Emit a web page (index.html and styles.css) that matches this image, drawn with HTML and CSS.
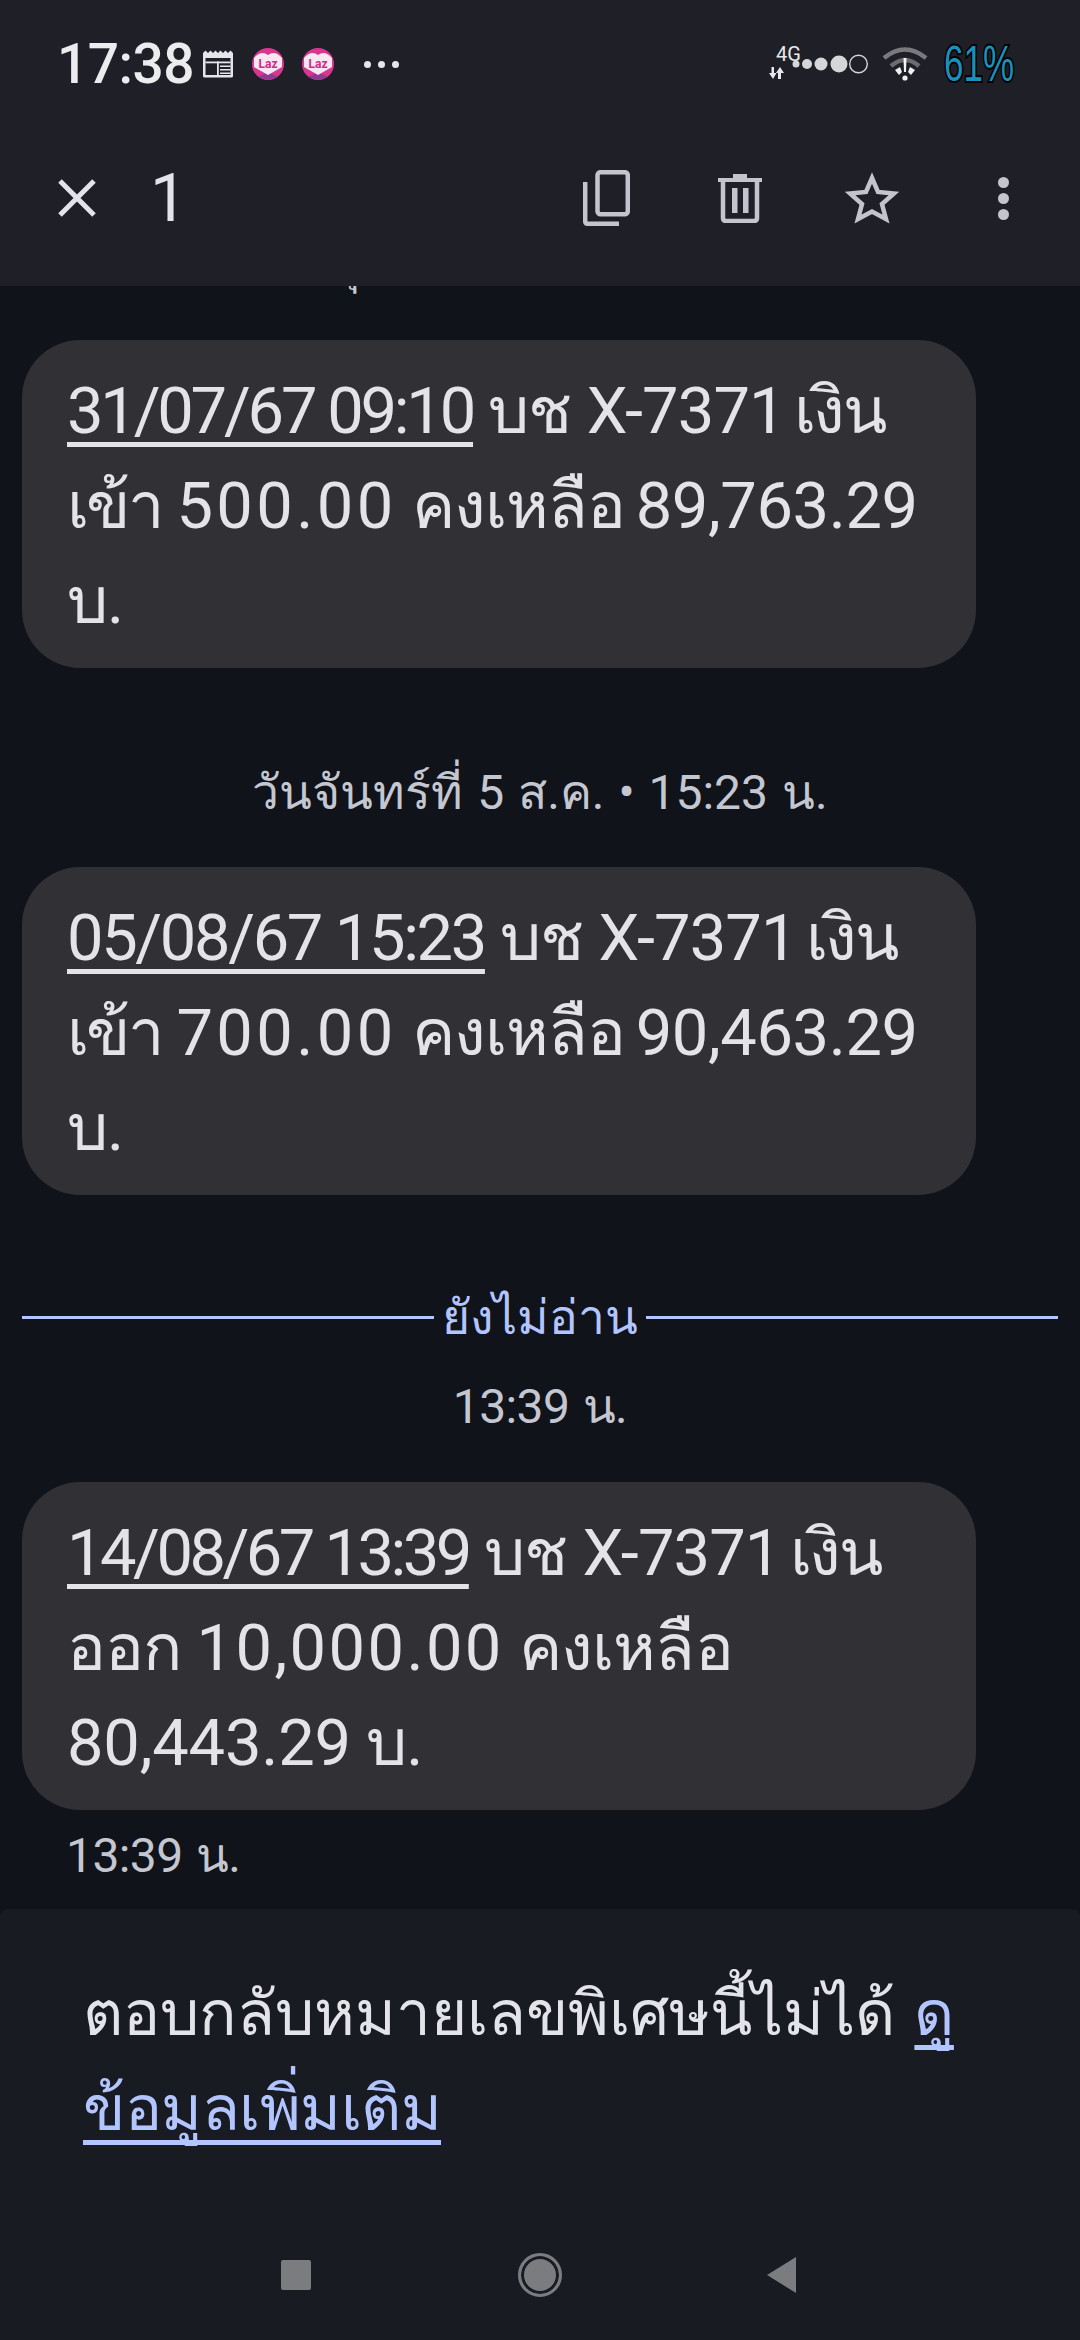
FILE: index.html
```html
<!DOCTYPE html>
<html lang="th">
<head>
  <meta charset="utf-8" />
  <title>ข้อความ</title>
  <link rel="stylesheet" href="styles.css">
</head>
<body>

<header class="appbar">
  <div class="status">
    <div class="status-left">
      <span class="clock">17:38</span>
      <svg class="ico-news" viewBox="0 0 30 28" width="30" height="28">
        <path d="M0 3 L2.5 0.5 L5 3 L7.5 0.5 L10 3 L12.5 0.5 L15 3 L17.5 0.5 L20 3 L22.5 0.5 L25 3 L27.5 0.5 L30 3 V26 Q30 27.5 28.5 27.5 H1.5 Q0 27.5 0 26 Z" fill="#e6e6ea"/>
        <rect x="2.5" y="8" width="25" height="17" fill="#1f2027"/>
        <rect x="2.5" y="11.5" width="25" height="1.8" fill="#e6e6ea"/>
        <rect x="14" y="11.5" width="1.8" height="14" fill="#e6e6ea"/>
        <rect x="17" y="15.5" width="10.5" height="1.5" fill="#e6e6ea"/>
        <rect x="17" y="19" width="10.5" height="1.5" fill="#e6e6ea"/>
        <rect x="17" y="22.5" width="10.5" height="1.5" fill="#e6e6ea"/>
      </svg>
      <svg class="ico-laz" viewBox="0 0 32 32" width="32" height="32">
        <circle cx="16" cy="16" r="16" fill="#d9368f"/>
        <path d="M6 29 L16 24 L26 29 L16 32 Z" fill="#8e3a94"/>
        <path d="M2 10 Q9 2 16 7 Q23 2 30 10 V19 L16 27 L2 19 Z" fill="#f8e6f0"/>
        <text x="16" y="20" class="laz-text">Laz</text>
      </svg>
      <svg class="ico-laz" viewBox="0 0 32 32" width="32" height="32">
        <circle cx="16" cy="16" r="16" fill="#d9368f"/>
        <path d="M6 29 L16 24 L26 29 L16 32 Z" fill="#8e3a94"/>
        <path d="M2 10 Q9 2 16 7 Q23 2 30 10 V19 L16 27 L2 19 Z" fill="#f8e6f0"/>
        <text x="16" y="20" class="laz-text">Laz</text>
      </svg>
      <span class="more-dots"><i></i><i></i><i></i></span>
    </div>
    <div class="status-right">
      <div class="net">
        <span class="net-label">4G</span>
        <svg class="net-arrows" viewBox="0 0 16 12" width="16" height="12">
          <path d="M5 0 V6 H7.5 L4 12 L0 6 H2.5 V0 Z M9 12 V6 H7 L11 0 L15 6 H12 V12 Z" fill="#e8e8ec"/>
        </svg>
      </div>
      <svg class="signal" viewBox="0 0 76 22" width="76" height="22">
        <circle cx="4" cy="11" r="3.5" fill="#d6d6d9"/>
        <circle cx="15" cy="11" r="5" fill="#d6d6d9"/>
        <circle cx="29" cy="11" r="6.5" fill="#d6d6d9"/>
        <circle cx="47" cy="11" r="8.5" fill="#d6d6d9"/>
        <circle cx="66.5" cy="11" r="8.8" fill="none" stroke="#d6d6d9" stroke-width="1.4"/>
      </svg>
      <svg class="wifi" viewBox="0 0 46 36" width="46" height="36">
        <path d="M2 12 Q23 -5 44 12" fill="none" stroke="#7a7a7e" stroke-width="4.5"/>
        <path d="M9 20 Q23 8 37 20" fill="none" stroke="#6c6c70" stroke-width="4.5"/>
        <path d="M13 24 L18 21 L20 26 L17 29 Z M33 24 L28 21 L26 26 L29 29 Z" fill="#f0f0f0"/>
        <path d="M21.5 12 H24.5 L24 26 H22 Z" fill="#f4f4f4"/>
        <circle cx="23" cy="32" r="2.6" fill="#f0f0f0"/>
      </svg>
      <span class="battery">61%</span>
    </div>
  </div>

  <div class="toolbar">
    <svg class="ico-close" viewBox="0 0 38 38" width="38" height="38">
      <path d="M2 2 L36 36 M36 2 L2 36" stroke="#e3e3ea" stroke-width="5" fill="none"/>
    </svg>
    <span class="count">1</span>
    <div class="actions">
      <svg viewBox="0 0 47 56" width="47" height="56" class="act-copy">
        <rect x="14.5" y="2.2" width="30.3" height="42" rx="3" fill="none" stroke="#c4c4cf" stroke-width="4.5"/>
        <path d="M2.2 12 V51 Q2.2 53.8 5 53.8 H36" fill="none" stroke="#c4c4cf" stroke-width="4.5"/>
      </svg>
      <svg viewBox="0 0 44 50" width="44" height="50" class="act-trash">
        <path d="M0 5 H15 V1 H29 V5 H44 V9 H0 Z" fill="#c4c4cf"/>
        <path d="M5 8 V45 Q5 48 8 48 H36 Q39 48 39 45 V8" fill="none" stroke="#c4c4cf" stroke-width="4.5"/>
        <rect x="14" y="15" width="5.5" height="25" fill="#c4c4cf"/>
        <rect x="25" y="15" width="5.5" height="25" fill="#c4c4cf"/>
      </svg>
      <svg viewBox="0 0 54 52" width="54" height="52" class="act-star">
        <path d="M27 6 L33 20 L49 21.5 L37 32 L41 47 L27 39.5 L13 47 L17 32 L5 21.5 L21 20 Z" fill="none" stroke="#c4c4cf" stroke-width="4.5"/>
      </svg>
      <span class="act-more"><i></i><i></i><i></i></span>
    </div>
  </div>
</header>

<main class="thread">
  <p class="stamp stamp-clipped">วันพุธที่ 31 ก.ค. • 09:10 น.</p>

  <div class="bubble"><u>31/07/67 09:10</u> บช X-7371 <span class="th-tight">เงิน</span><span class="th-word">เข้า</span> <span class="amt">500.00</span> คงเหลือ <span class="bal-tight">89,763.29</span> บ.</div>

  <p class="stamp stamp-date">วันจันทร์ที่ 5 ส.ค. • 15:23 น.</p>

  <div class="bubble"><u class="wide">05/08/67 15:23</u> บช X-7371 <span class="th-tight">เงิน</span><span class="th-word">เข้า</span> <span class="amt">700.00</span> คงเหลือ <span class="bal-tight">90,463.29</span> บ.</div>

  <div class="unread"><span>ยังไม่อ่าน</span></div>
  <p class="stamp stamp-time">13:39 น.</p>

  <div class="bubble"><u class="narrow">14/08/67 13:39</u> บช X-7371 <span class="th-tight">เงิน</span>ออก <span class="amt-long">10,000.00</span> คงเหลือ <span class="bal">80,443.29</span> บ.</div>
  <p class="sent-time">13:39 น.</p>
</main>

<footer class="panel">
  <p class="notice">ตอบกลับหมายเลขพิเศษนี้ไม่ได้ <a href="#">ดูข้อมูลเพิ่มเติม</a></p>
  <nav class="navbar">
    <span class="nav-square"></span>
    <span class="nav-home"></span>
    <svg class="nav-back" viewBox="0 0 30 36" width="30" height="36"><path d="M30 0 V36 L1 18 Z" fill="#7b7c80"/></svg>
  </nav>
</footer>

</body>
</html>
```

FILE: styles.css
```css
* {
  box-sizing: border-box;
}

html, body {
  margin: 0;
  padding: 0;
}

body {
  width: 1080px;
  height: 2340px;
  overflow: hidden;
  display: flex;
  flex-direction: column;
  background-color: #10131a;
  color: #e3e3e8;
  font-family: Roboto, "Noto Sans", sans-serif;
}

p {
  margin: 0;
}

/* top area */
.appbar {
  height: 286px;
  flex: none;
  background-color: #1f2027;
  position: relative;
  z-index: 2;
}

.status {
  height: 128px;
  display: flex;
  justify-content: space-between;
  align-items: center;
  padding: 0 66px 0 57px;
}

.status-left, .status-right {
  display: flex;
  align-items: center;
}

.clock {
  font-size: 55px;
  font-weight: 500;
  color: #ececef;
  width: 146px;
  letter-spacing: -0.5px;
}

.ico-laz {
  margin-left: 18px;
}

.ico-news + .ico-laz {
  margin-left: 19px;
}

.laz-text {
  font-size: 12px;
  font-weight: 700;
  fill: #d4298a;
  text-anchor: middle;
}

.more-dots {
  display: flex;
  gap: 7px;
  margin-left: 30px;
}

.more-dots i {
  width: 7px;
  height: 7px;
  border-radius: 50%;
  background-color: #e6e6ea;
}

.net {
  width: 30px;
  height: 36px;
  display: flex;
  flex-direction: column;
  padding-left: 3px;
  font-size: 20px;
  line-height: 16px;
  color: #e8e8ec;
}

.net-label {
  margin-left: 5px;
}

.net-arrows {
  margin-top: 5px;
  margin-left: -2px;
}

.signal {
  margin-left: -6px;
}

.wifi {
  margin-left: 14px;
}

.battery {
  margin-left: 16px;
  font-family: "Liberation Sans", sans-serif;
  font-size: 50px;
  color: #1b90bc;
  -webkit-text-stroke: 4px #000;
  paint-order: stroke fill;
  transform: scaleX(0.7);
  transform-origin: left center;
  width: 70px;
  white-space: nowrap;
}

.toolbar {
  height: 158px;
  display: flex;
  align-items: center;
  padding: 0 0 18px 58px;
}

.count {
  font-size: 66px;
  color: #e3e3ea;
  margin-left: 54px;
}

.actions {
  margin-left: auto;
  display: flex;
  align-items: center;
}

.act-copy {
  margin-right: 88px;
}

.act-trash {
  margin-right: 83px;
}

.act-more {
  display: flex;
  flex-direction: column;
  gap: 5px;
  margin-left: 99px;
  margin-right: 71px;
}

.act-more i {
  width: 11px;
  height: 11px;
  border-radius: 50%;
  background-color: #c4c4cf;
}

/* messages */
.thread {
  flex: 1;
  overflow: hidden;
  padding: 0 22px;
}

.stamp {
  font-size: 48px;
  line-height: 60px;
  word-spacing: 2px;
  text-align: center;
  color: #c4c6d0;
}

.stamp-clipped {
  margin-top: -51px;
  margin-bottom: 45px;
}

.stamp-date {
  margin: 95px 0 44px;
}

.stamp-time {
  margin: 30px 0 45px;
  letter-spacing: -0.6px;
}

.bubble {
  width: 954px;
  height: 328px;
  padding: 24px 45px 0;
  border-radius: 58px;
  background-color: #303035;
  font-size: 65px;
  line-height: 95px;
  letter-spacing: -0.9px;
  color: #e3e3e8;
}

.bubble u {
  letter-spacing: -3.2px;
  text-decoration-thickness: 5px;
  text-underline-offset: 9px;
}

.bubble u.wide {
  letter-spacing: -2.35px;
}

.bubble u.narrow {
  letter-spacing: -3.5px;
}

/* the original font has round zeros and a tighter Thai set than Roboto's fallback */
.th-tight {
  margin-left: -6px;
  letter-spacing: -2.4px;
}

.th-word {
  letter-spacing: -2.6px;
}

.amt {
  letter-spacing: 3.4px;
}

.amt-long {
  letter-spacing: 2.4px;
}

.bal {
  letter-spacing: -0.2px;
}

.bal-tight {
  margin-left: -5px;
  letter-spacing: -0.4px;
}

.unread {
  display: flex;
  align-items: center;
  gap: 8px;
  margin-top: 92px;
  height: 60px;
  color: #b3c5ff;
  font-size: 48px;
}

.unread::before, .unread::after {
  content: "";
  flex: 1;
  height: 3px;
  background-color: #b3c5ff;
}

.sent-time {
  font-size: 48px;
  line-height: 60px;
  word-spacing: 2px;
  letter-spacing: -0.6px;
  color: #c4c6d0;
  margin: 16px 0 0 44px;
}

/* bottom panel */
.panel {
  height: 431px;
  flex: none;
  background-color: #181b22;
  border-radius: 8px 8px 0 0;
  display: flex;
  flex-direction: column;
}

.notice {
  padding: 57px 83px 0;
  font-size: 62px;
  line-height: 95px;
  color: #e3e3ea;
}

.notice a {
  margin-left: 4px;
  letter-spacing: -0.5px;
  color: #b3c5ff;
  text-decoration-thickness: 5px;
  text-underline-offset: 10px;
  text-decoration-skip-ink: none;
}

.navbar {
  margin-top: auto;
  height: 130px;
  display: flex;
  align-items: center;
  padding-left: 281px;
}

.nav-square {
  width: 30px;
  height: 30px;
  border-radius: 2px;
  background-color: #7b7c80;
}

.nav-home {
  width: 44px;
  height: 44px;
  margin-left: 207px;
  border-radius: 50%;
  background-color: #7b7c80;
  border: 3px solid #7b7c80;
  box-shadow: inset 0 0 0 3px #181b22;
}

.nav-back {
  margin-left: 204px;
}
```
